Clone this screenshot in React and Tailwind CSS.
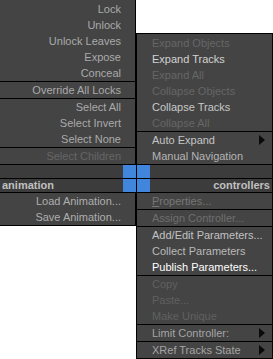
import React from "react";

const font = { fontFamily: '"Liberation Sans", Arial, sans-serif' };

function Sep() {
  return <div className="h-px bg-black" />;
}

function LItem({ children, c = "text-[#aaaaaa]" }) {
  return (
    <div className={`h-[16px] leading-[16px] text-[11px] text-right pr-[14px] whitespace-nowrap ${c}`}>
      {children}
    </div>
  );
}

function RItem({ children, c = "text-[#c4c4c4]", arrow = false }) {
  return (
    <div className={`relative h-[16px] leading-[16px] text-[11px] pl-[15px] whitespace-nowrap ${c}`}>
      {children}
      {arrow && (
        <svg className="absolute right-[7px] top-[3px]" width="6" height="10" viewBox="0 0 6 10">
          <path d="M0 0 L6 5 L0 10 Z" fill="#0a0a0a" />
        </svg>
      )}
    </div>
  );
}

export default function App() {
  const dis = "text-[#666666]";
  return (
    <div className="relative w-[273px] h-[359px] bg-white overflow-hidden" style={font}>
      <div className="flex items-start">
        {/* left menu */}
        <div className="w-[136px] bg-[#444444] border-r border-b border-black pt-px">
          <LItem>Lock</LItem>
          <LItem>Unlock</LItem>
          <LItem>Unlock Leaves</LItem>
          <LItem>Expose</LItem>
          <LItem>Conceal</LItem>
          <Sep />
          <LItem>Override All Locks</LItem>
          <Sep />
          <LItem>Select All</LItem>
          <LItem>Select Invert</LItem>
          <LItem>Select None</LItem>
          <Sep />
          <LItem c={dis}>Select Children</LItem>
          <Sep />
          <div className="h-[13px] bg-[#3c3c3c]" />
          <Sep />
          <div className="h-[13px] bg-[#3c3c3c] text-[11px] leading-[13px] font-bold text-[#c0c0c0] pl-[2px]">
            animation
          </div>
          <Sep />
          <LItem c="text-[#aeaeae]">Load Animation...</LItem>
          <LItem c="text-[#aeaeae]">Save Animation...</LItem>
        </div>
        {/* right menu */}
        <div className="w-[137px] mt-[33px] bg-[#444444] border border-black pt-px">
          <RItem c={dis}>Expand Objects</RItem>
          <RItem c="text-[#d2d2d2]">Expand Tracks</RItem>
          <RItem c={dis}>Expand All</RItem>
          <RItem c={dis}>Collapse Objects</RItem>
          <RItem c="text-[#c8c8c8]">Collapse Tracks</RItem>
          <RItem c={dis}>Collapse All</RItem>
          <Sep />
          <RItem c="text-[#c4c4c4]" arrow>Auto Expand</RItem>
          <RItem c="text-[#b4b4b4]">Manual Navigation</RItem>
          <Sep />
          <div className="h-[13px] bg-[#3c3c3c]" />
          <Sep />
          <div className="h-[13px] bg-[#3c3c3c] text-[11px] leading-[13px] font-bold text-[#c0c0c0] text-right pr-[2px]">
            controllers
          </div>
          <Sep />
          <RItem c="text-[#767676]"><span className="underline">P</span>roperties...</RItem>
          <Sep />
          <RItem c="text-[#6e6e6e]">Assign Controller...</RItem>
          <Sep />
          <RItem c="text-[#c2c2c2]">Add/Edit Parameters...</RItem>
          <RItem c="text-[#bababa]">Collect Parameters</RItem>
          <RItem c="text-white">Publish Parameters...</RItem>
          <Sep />
          <RItem c="text-[#606060]">Copy</RItem>
          <RItem c="text-[#606060]">Paste...</RItem>
          <RItem c="text-[#606060]">Make Unique</RItem>
          <Sep />
          <RItem c="text-[#a4a4a4]" arrow>Limit Controller:</RItem>
          <Sep />
          <RItem c="text-[#a4a4a4]" arrow>XRef Tracks State</RItem>
        </div>
      </div>
      {/* center quad squares */}
      <div className="absolute left-[123px] top-[165px] w-[13px] h-[13px] bg-[#3f86dc]" />
      <div className="absolute left-[137px] top-[165px] w-[13px] h-[13px] bg-[#3f86dc]" />
      <div className="absolute left-[123px] top-[179px] w-[13px] h-[13px] bg-[#3f86dc]" />
      <div className="absolute left-[137px] top-[179px] w-[13px] h-[13px] bg-[#3f86dc]" />
    </div>
  );
}
